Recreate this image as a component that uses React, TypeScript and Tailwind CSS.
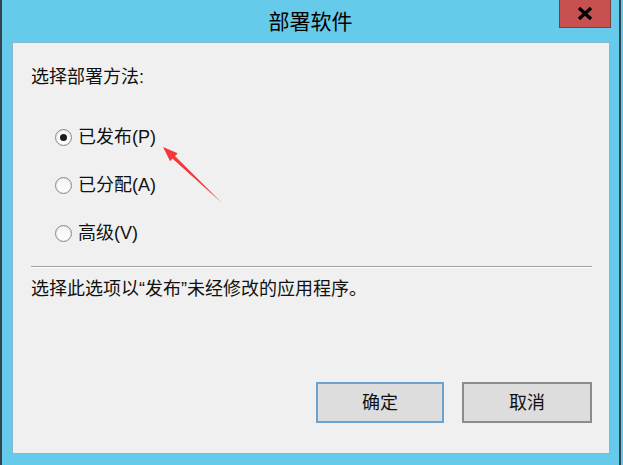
import React, { FC } from "react";

interface RadioProps {
  label: string;
  checked?: boolean;
}

const Radio: FC<RadioProps> = ({ label, checked }) => {
  return (
    <div className="flex h-6 items-center gap-[6px]">
      <span className="flex h-[17px] w-[17px] items-center justify-center rounded-full border border-[#8a8a8a] bg-gradient-to-b from-[#f4f4f4] to-white shadow-[inset_0_0_1px_#bdbdbd]">
        {checked && <span className="h-[7px] w-[7px] rounded-full bg-[#1c1c1c]" />}
      </span>
      <span>{label}</span>
    </div>
  );
};

const options = [
  { label: "已发布(P)", checked: true },
  { label: "已分配(A)", checked: false },
  { label: "高级(V)", checked: false },
];

export default function App() {
  return (
    <div className="relative h-[465px] w-[623px] overflow-hidden bg-[#66cbea] font-['Liberation_Sans','Noto_Sans_CJK_SC',sans-serif] text-[#111]">
      <div className="flex h-full w-[621px] flex-col border-x-2 border-[#34444e]">
        {/* title bar */}
        <div className="relative flex h-[42px] items-center justify-center">
          <span className="text-[21px] leading-none text-black">部署软件</span>
          <button className="absolute right-[8px] top-0 flex h-[28px] w-[52px] items-center justify-center border border-t-0 border-[#7a3c3c] bg-[#c75050]">
            <svg width="16" height="13" viewBox="0 0 16 13">
              <path d="M2 1 L14 12 M14 1 L2 12" stroke="#000" strokeWidth="3.4" />
            </svg>
          </button>
        </div>

        {/* body panel */}
        <div className="ml-[10px] mr-[9px] flex h-[412px] flex-col border border-[#86b9cf] bg-[#f0f0f0] pl-[18px] pr-[17px] text-[18px] leading-6">
          <div className="mt-[22px]">选择部署方法:</div>

          <div className="ml-[24px] mt-[36px] flex flex-col gap-6">
            {options.map((o, i) => (
              <Radio key={`opt-${i}`} label={o.label} checked={o.checked} />
            ))}
          </div>

          <div className="mt-[21px] h-[2px] border-t border-b border-t-[#a0a0a0] border-b-white" />

          <div className="mt-[9px]">选择此选项以“发布”未经修改的应用程序。</div>

          <div className="mt-auto mb-[30px] flex justify-end gap-[18px]">
            <button className="h-[41px] w-[128px] border-2 border-[#6fa1cf] bg-[#dddddd] text-[18px] text-[#111]">
              确定
            </button>
            <button className="h-[41px] w-[130px] border-2 border-[#8c8c8c] bg-[#dddddd] text-[18px] text-[#111]">
              取消
            </button>
          </div>
        </div>
      </div>

      {/* red annotation arrow */}
      <svg className="pointer-events-none absolute left-0 top-0" width="623" height="465">
        <polygon points="163,147 177.7,153.3 170.1,161.3" fill="#f23a3a" />
        <polygon points="170.4,156.7 173,153.9 222,203" fill="#f23a3a" />
      </svg>
    </div>
  );
}
